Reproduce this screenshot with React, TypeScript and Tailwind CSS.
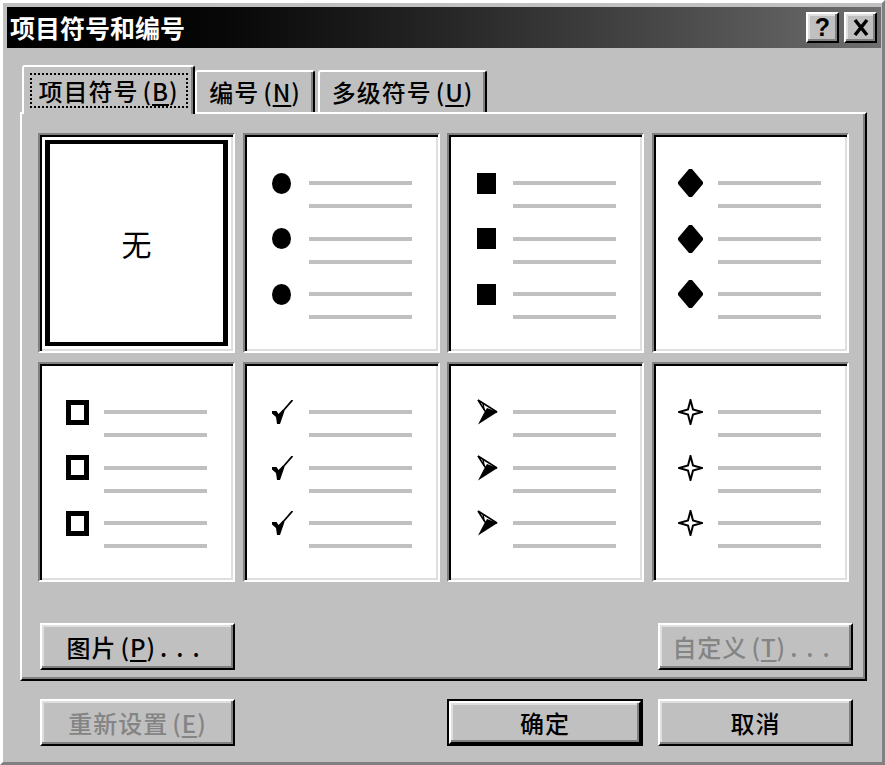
import React from "react"

const raised =
  "border-2 border-t-white border-l-white border-r-black border-b-black shadow-[inset_-2px_-2px_0_#808080,inset_2px_2px_0_#dfdfdf] bg-[#c0c0c0]"

const sunken =
  "border-2 border-t-[#808080] border-l-[#808080] border-r-white border-b-white shadow-[inset_2px_2px_0_#000,inset_-2px_-2px_0_#dfdfdf] bg-white"

function Key({ k }: { k: string }) {
  return (
    <span className="ml-[4px]">
      (<span className="underline decoration-2 underline-offset-[3px]">{k}</span>)
    </span>
  )
}

function Disc() {
  return (
    <svg width="19" height="21" className="shrink-0">
      <ellipse cx="9.5" cy="10.5" rx="9.5" ry="10.5" fill="#000" />
    </svg>
  )
}

function Square() {
  return <div className="h-[21px] w-[19px] shrink-0 bg-black" />
}

function Diamond() {
  return (
    <svg width="25" height="28" className="shrink-0">
      <polygon points="11,0 14,0 25,13 25,15 14,28 11,28 0,15 0,13" fill="#000" />
    </svg>
  )
}

function Box() {
  return <div className="h-[25px] w-[23px] shrink-0 border-[5px] border-black bg-white" />
}

function Check() {
  return (
    <svg width="21" height="24" className="shrink-0 ml-[2px]">
      <polygon points="0,11 4.5,11 6.5,14 11,9.5 12.5,11 8,24 5,24 4,17 0,13.5" fill="#000" />
      <line x1="10.5" y1="11.5" x2="20.5" y2="0" stroke="#000" strokeWidth="1.8" />
    </svg>
  )
}

function Arrow() {
  return (
    <svg width="21" height="26" className="shrink-0 ml-[2px]">
      <path d="M1 1 L20 13 L8 12 Z" fill="#fff" stroke="#000" strokeWidth="1.6" strokeLinejoin="miter" />
      <line x1="6" y1="4" x2="7" y2="11" stroke="#000" strokeWidth="1.5" />
      <polygon points="10,9 20.5,13 1,25.5 7,14" fill="#000" />
    </svg>
  )
}

function Star() {
  return (
    <svg width="25" height="26" className="shrink-0">
      <path
        d="M12.5 1 L15 10.5 L24 13 L15 15.5 L12.5 25 L10 15.5 L1 13 L10 10.5 Z"
        fill="#fff"
        stroke="#000"
        strokeWidth="2"
      />
    </svg>
  )
}

function BulletList({ bullet }: { bullet: React.ReactNode }) {
  return (
    <div className="flex flex-col gap-[28.5px] pt-[46px]">
      {[0, 1, 2].map((i) => (
        <div key={i} className="flex items-start">
          <div className="flex h-[4px] w-[64px] items-center justify-center pl-[10px]">{bullet}</div>
          <div className="flex flex-col gap-[19px]">
            <div className="h-[4px] w-[103px] bg-[#c0c0c0]" />
            <div className="h-[4px] w-[103px] bg-[#c0c0c0]" />
          </div>
        </div>
      ))}
    </div>
  )
}

function Cell({ children }: { children: React.ReactNode }) {
  return <div className={`h-[220px] ${sunken}`}>{children}</div>
}

function Button({
  children,
  disabled,
  className = "",
}: {
  children: React.ReactNode
  disabled?: boolean
  className?: string
}) {
  return (
    <div
      className={`flex h-[47px] w-[195px] items-center justify-center text-[24px] font-medium leading-none tracking-[1px] ${raised} ${
        disabled ? "text-[#848484]" : "text-black"
      } ${className}`}
    >
      {children}
    </div>
  )
}

export default function App() {
  return (
    <div className="flex h-[765px] w-[885px] flex-col border-t-[3px] border-l-[3px] border-r-[3px] border-b-[3px] border-t-white border-l-white border-r-[#808080] border-b-[#808080] bg-[#c0c0c0] font-['Noto_Sans_CJK_SC',sans-serif] text-black">
      {/* title bar */}
      <div className="ml-[4px] mr-[1px] mt-[4px] flex h-[41px] items-center justify-between bg-linear-to-r from-black to-[#6e6e6e] pl-[3px] pr-[4px]">
        <span className="text-[25px] font-bold leading-none text-white">项目符号和编号</span>
        <div className="flex gap-[5px]">
          <div className={`flex h-[31px] w-[33px] items-center justify-center ${raised}`}>
            <span className="font-['Liberation_Sans',sans-serif] text-[25px] font-bold leading-none">?</span>
          </div>
          <div className={`flex h-[31px] w-[33px] items-center justify-center ${raised}`}>
            <svg width="16" height="19">
              <line x1="2" y1="2" x2="14" y2="17" stroke="#000" strokeWidth="3.5" />
              <line x1="14" y1="2" x2="2" y2="17" stroke="#000" strokeWidth="3.5" />
            </svg>
          </div>
        </div>
      </div>

      {/* tabs */}
      <div className="ml-[17px] mt-[17px] flex h-[47px] items-end text-[24px] font-medium leading-none">
        <div className="relative z-10 -mb-[2px] ml-[2px] flex h-[49px] w-[173px] items-start justify-center rounded-t-[3px] border-l-2 border-r-2 border-t-2 border-l-white border-r-black border-t-white bg-[#c0c0c0] pt-[6px] shadow-[inset_-2px_0_0_#808080]">
          <div className="flex h-[35px] w-[158px] items-center justify-center border-2 border-dotted border-black tracking-[1px]">
            项目符号<Key k="B" />
          </div>
        </div>
        <div className="flex h-[42px] w-[120px] items-center justify-center rounded-t-[3px] border-l-2 border-r-2 border-t-2 border-l-white border-r-black border-t-white tracking-[1px] shadow-[inset_-2px_0_0_#808080]">
          编号<Key k="N" />
        </div>
        <div className="ml-[3px] flex h-[42px] w-[169px] items-center justify-center rounded-t-[3px] border-l-2 border-r-2 border-t-2 border-l-white border-r-black border-t-white tracking-[1px] shadow-[inset_-2px_0_0_#808080]">
          多级符号<Key k="U" />
        </div>
      </div>

      {/* panel */}
      <div className="ml-[17px] flex h-[569px] w-[847px] flex-col border-2 border-b-black border-l-white border-r-black border-t-white pl-[16px] pt-[19px] shadow-[inset_-2px_-2px_0_#808080]">
        <div className="grid grid-cols-[repeat(4,197px)] grid-rows-[220px_220px] gap-x-[7.67px] gap-y-[9px]">
          <Cell>
            <div className="h-full p-[5px]">
              <div className="flex h-full items-center justify-center border-x-[5px] border-y-[4px] border-black text-[30px] leading-none">
                无
              </div>
            </div>
          </Cell>
          <Cell>
            <BulletList bullet={<Disc />} />
          </Cell>
          <Cell>
            <BulletList bullet={<Square />} />
          </Cell>
          <Cell>
            <BulletList bullet={<Diamond />} />
          </Cell>
          <Cell>
            <BulletList bullet={<Box />} />
          </Cell>
          <Cell>
            <BulletList bullet={<Check />} />
          </Cell>
          <Cell>
            <BulletList bullet={<Arrow />} />
          </Cell>
          <Cell>
            <BulletList bullet={<Star />} />
          </Cell>
        </div>
        <div className="ml-[2px] mt-[41px] flex w-[813px] justify-between">
          <Button>
            图片<Key k="P" />
            <span className="ml-[4px] tracking-[9px]">...</span>
          </Button>
          <Button disabled>
            自定义<Key k="T" />
            <span className="ml-[4px] tracking-[9px]">...</span>
          </Button>
        </div>
      </div>

      {/* bottom buttons */}
      <div className="ml-[37px] mt-[18px] flex">
        <Button disabled>
          重新设置<Key k="E" />
        </Button>
        <div className="ml-[212px] h-[47px] w-[196px] border-2 border-black">
          <div className={`flex h-full w-full items-center justify-center text-[24px] font-medium leading-none tracking-[1px] ${raised}`}>
            确定
          </div>
        </div>
        <Button className="ml-[15px]">取消</Button>
      </div>
    </div>
  )
}
